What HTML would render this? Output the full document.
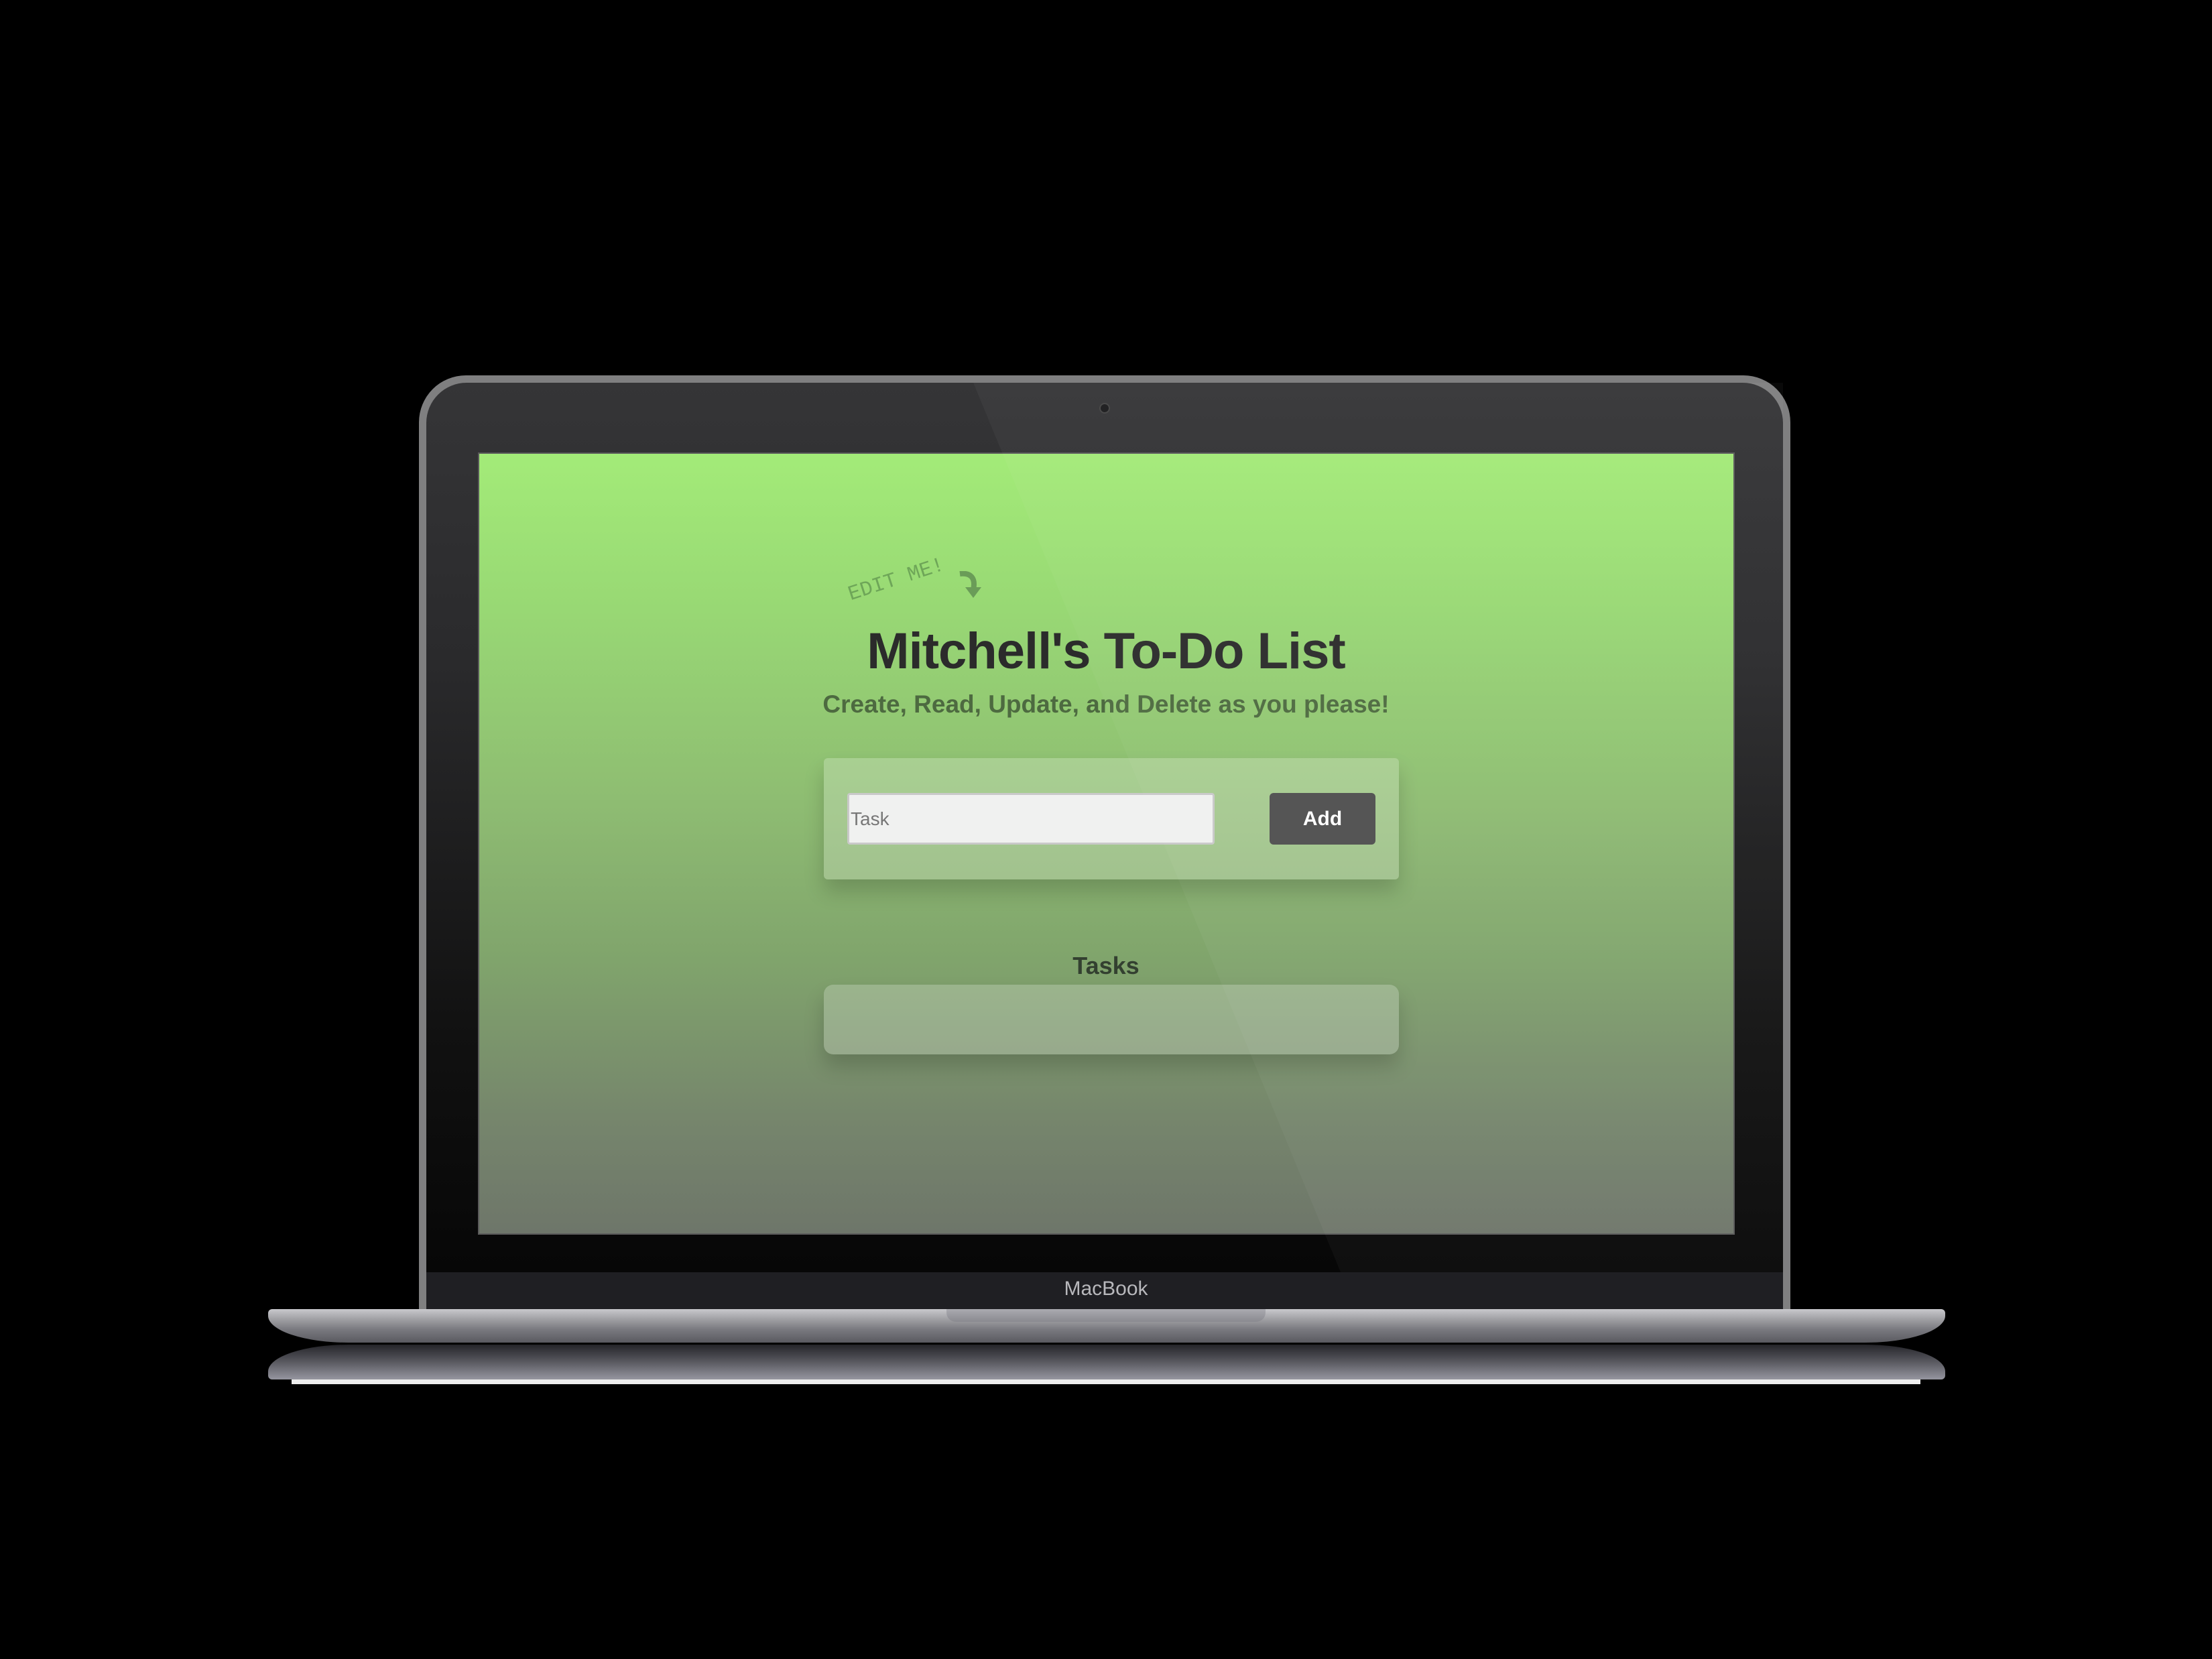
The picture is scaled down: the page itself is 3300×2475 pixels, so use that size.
<!DOCTYPE html>
<html><head><meta charset="utf-8"><style>
*{margin:0;padding:0;box-sizing:border-box}
body{width:3300px;height:2475px;background:#000;position:relative;overflow:hidden;font-family:"Liberation Sans",sans-serif}
.lid{position:absolute;left:625px;top:560px;width:2046px;height:1400px;background:#7f7f80;border-radius:70px 70px 0 0}
.lidin{position:absolute;left:11px;top:11px;right:11px;bottom:0;border-radius:60px 60px 0 0;background:linear-gradient(#353537 0%,#2a2a2c 30%,#111 70%,#050505 100%);overflow:hidden}
.cam{position:absolute;left:1640px;top:601px;width:16px;height:16px;border-radius:50%;background:#1a1a1c;border:2px solid #444}
.bez{position:absolute;left:636px;top:1898px;width:2024px;height:55px;background:#1f1f23}
.mb{position:absolute;left:0;width:3300px;top:1906px;text-align:center;color:#b8b8bc;font-size:30px}
.screen{position:absolute;left:713px;top:675px;width:1875px;height:1167px;background:linear-gradient(#a3eb78 0%,#98d874 20%,#8ebc72 45%,#80a46c 65%,#76866c 85%,#6e766a 100%);overflow:hidden;border:2px solid #5a5a5a}
.base{position:absolute;left:400px;top:1953px;width:2502px;height:50px;background:linear-gradient(#c8c8cc 0%,#a0a0a4 30%,#7a7a80 60%,#5a5a60 100%);border-radius:6px 6px 120px 120px/6px 6px 40px 40px}
.notch{position:absolute;left:1412px;top:1953px;width:476px;height:19px;background:linear-gradient(#aaaab0,#8a8a90);border-radius:0 0 14px 14px}
.rbase{position:absolute;left:400px;top:2006px;width:2502px;height:52px;background:linear-gradient(#2a2a30 0%,#6a6a72 50%,#b0b0bc 100%);border-radius:120px 120px 6px 6px/40px 40px 6px 6px;opacity:.85}
.rline{position:absolute;left:435px;top:2058px;width:2430px;height:7px;background:#eee}
.abs{position:absolute}
h1{position:absolute;left:0;width:3300px;top:928px;text-align:center;font-size:76px;font-weight:bold;color:#2b2b2b;letter-spacing:-1px}
h2{position:absolute;left:0;width:3300px;top:1030px;text-align:center;font-size:37px;font-weight:bold;color:#4d6a40}
.card{position:absolute;left:1229px;top:1131px;width:858px;height:181px;background:rgba(255,255,255,.22);border-radius:6px;box-shadow:0 18px 30px rgba(0,0,0,.18)}
.inp{position:absolute;left:1264px;top:1183px;width:548px;height:77px;background:#f0f1f0;border:3px solid #c9c9c9;border-radius:4px;font-size:28px;color:#777;padding:20px 0 0 2px}
.btn{position:absolute;left:1894px;top:1183px;width:158px;height:77px;background:#4f4f4f;border-radius:6px;color:#fff;font-size:30px;font-weight:bold;text-align:center;line-height:77px}
.tasks{position:absolute;left:0;width:3300px;top:1420px;text-align:center;font-size:36px;font-weight:bold;color:#334030}
.tcard{position:absolute;left:1229px;top:1469px;width:858px;height:104px;background:rgba(255,255,255,.22);border-radius:14px;box-shadow:0 18px 30px rgba(0,0,0,.18)}
.edit{position:absolute;left:1272px;top:870px;font-family:"Liberation Mono",monospace;font-size:31px;color:#6ea658;transform:rotate(-18deg);transform-origin:left bottom;white-space:nowrap}
</style></head><body>
<div class="lid"><div class="lidin"></div></div>
<div class="cam"></div>
<div class="screen"></div>
<div class="edit">EDIT ME!</div>
<svg class="abs" style="left:1428px;top:852px" width="40" height="44" viewBox="0 0 40 44"><path d="M4 4 C20 2 28 10 24 28" stroke="#6a9c58" stroke-width="8" fill="none"/><path d="M12 24 L36 24 L24 40 Z" fill="#6a9c58"/></svg>
<h1>Mitchell's To-Do List</h1>
<h2>Create, Read, Update, and Delete as you please!</h2>
<div class="card"></div>
<div class="inp">Task</div>
<div class="btn">Add</div>
<div class="tasks">Tasks</div>
<div class="tcard"></div>
<svg class="abs" style="left:0;top:0" width="3300" height="2475"><polygon points="1452,571 2660,571 2660,1898 2000,1898" fill="rgba(255,255,255,0.035)"/></svg>
<div class="bez"></div>
<div class="mb">MacBook</div>
<div class="base"></div>
<div class="notch"></div>
<div class="rbase"></div>
<div class="rline"></div>
</body></html>
